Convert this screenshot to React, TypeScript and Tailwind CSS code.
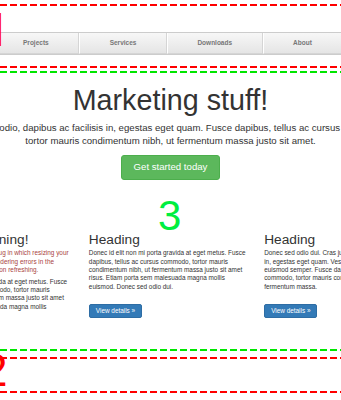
import React from "react";

function Dash({ color, className = "" }: { color: "red" | "green"; className?: string }) {
  const cls =
    color === "red"
      ? "h-[2px] w-full bg-[image:repeating-linear-gradient(90deg,#ff0000_0px,#ff0000_7px,transparent_7px,transparent_10px)]"
      : "h-[2px] w-full bg-[image:repeating-linear-gradient(90deg,#00e600_0px,#00e600_7px,transparent_7px,transparent_10px)]";
  return <div className={`${cls} ${className}`} />;
}

const navItems = ["Home", "Projects", "Services", "Downloads", "About", "Contact"];

function ViewBtn() {
  return (
    <a className="inline-flex h-[14px] items-center rounded-[2px] border border-[#2e6da4] bg-[#337ab7] px-[6px] text-[6.4px] text-white">
      View details »
    </a>
  );
}

export default function App() {
  return (
    <div className="relative h-[400px] w-full overflow-hidden bg-white font-['Liberation_Sans',Arial,sans-serif] text-[#333]">
      <div className="pt-[3.5px]">
        <Dash color="red" />
      </div>

      <div className="mt-[26.5px] flex justify-center">
        <nav className="flex h-[23px] w-[514px] shrink-0 overflow-hidden rounded-[3px] border border-[#ccc] bg-[#eee]">
          {navItems.map((item, i) => (
            <div
              key={item}
              className={`flex flex-auto items-center justify-center border-b border-b-[#d5d5d5] bg-linear-to-b from-[#f7f7f7] to-[#e5e5e5] text-[6.5px] font-bold text-[#777] ${
                i > 0 ? "border-l border-l-white" : ""
              } ${i < navItems.length - 1 ? "border-r border-r-[#d5d5d5]" : ""}`}
            >
              {item}
            </div>
          ))}
        </nav>
      </div>

      <Dash color="red" className="mt-[10.5px]" />
      <Dash color="green" className="mt-[3px]" />

      <div className="flex justify-center">
        <div className="w-[514px] shrink-0">
          <section className="px-[28px] pt-[12.9px] text-center">
            <h1 className="text-[28.7px] leading-[31.35px] font-normal text-[#333]">Marketing stuff!</h1>
            <p className="mt-[3.95px] text-[9.65px] leading-[13.5px] text-[#333]">
              Cras justo odio, dapibus ac facilisis in, egestas eget quam. Fusce dapibus, tellus ac cursus commodo,
              tortor mauris condimentum nibh, ut fermentum massa justo sit amet.
            </p>
            <div className="mt-[7.3px] flex justify-center">
              <a className="inline-flex h-[25px] items-center rounded-[3px] border border-[#4cae4c] bg-[#5cb85c] px-[11.5px] text-[9.65px] text-white">
                Get started today
              </a>
            </div>
          </section>

          <div className="mr-[2px] grid h-[169.3px] grid-cols-3 items-start gap-x-[14px] pt-[51.75px]">
            <div className="-ml-[3px] mr-[3px]">
              <h2 className="text-[13.7px] leading-[15.4px] font-normal">Safari bug warning!</h2>
              <p className="mt-[2.15px] mb-[3.5px] text-[6.4px] leading-[8.33px] text-[#a94442]">
                As of v9.1.2, Safari exhibits a bug in which resizing your browser horizontally causes rendering errors
                in the justified nav that are cleared upon refreshing.
              </p>
              <p className="mb-[5px] text-[6.4px] leading-[8.33px]">
                Donec id elit non mi porta gravida at eget metus. Fusce dapibus, tellus ac cursus commodo, tortor mauris
                condimentum nibh, ut fermentum massa justo sit amet risus. Etiam porta sem malesuada magna mollis
                euismod. Donec sed odio dui.
              </p>
              <ViewBtn />
            </div>
            <div>
              <h2 className="text-[13.7px] leading-[15.4px] font-normal">Heading</h2>
              <p className="mt-[2.15px] mb-[5px] text-[6.4px] leading-[8.33px]">
                Donec id elit non mi porta gravida at eget metus. Fusce dapibus, tellus ac cursus commodo, tortor mauris
                condimentum nibh, ut fermentum massa justo sit amet risus. Etiam porta sem malesuada magna mollis
                euismod. Donec sed odio dui.
              </p>
              <ViewBtn />
            </div>
            <div>
              <h2 className="text-[13.7px] leading-[15.4px] font-normal">Heading</h2>
              <p className="mt-[2.15px] mb-[5px] text-[6.4px] leading-[8.33px]">
                Donec sed odio dui. Cras justo odio, dapibus ac facilisis in, egestas eget quam. Vestibulum id ligula
                porta felis euismod semper. Fusce dapibus, tellus ac cursus commodo, tortor mauris condimentum nibh, ut
                fermentum massa.
              </p>
              <ViewBtn />
            </div>
          </div>
        </div>
      </div>

      <Dash color="green" />
      <Dash color="red" className="mt-[5.7px]" />
      <Dash color="red" className="mt-[32.3px]" />

      <span className="absolute left-[-15.5px] top-[7px] z-10 font-['Roboto',sans-serif] text-[46px] leading-none text-[#ff0000]">1</span>
      <span className="absolute left-[158px] top-[195px] z-10 text-[42px] leading-none text-[#00ee40]">3</span>
      <span className="absolute left-[-18px] top-[346.8px] z-10 text-[46px] leading-none text-[#ff0000]">2</span>
    </div>
  );
}
